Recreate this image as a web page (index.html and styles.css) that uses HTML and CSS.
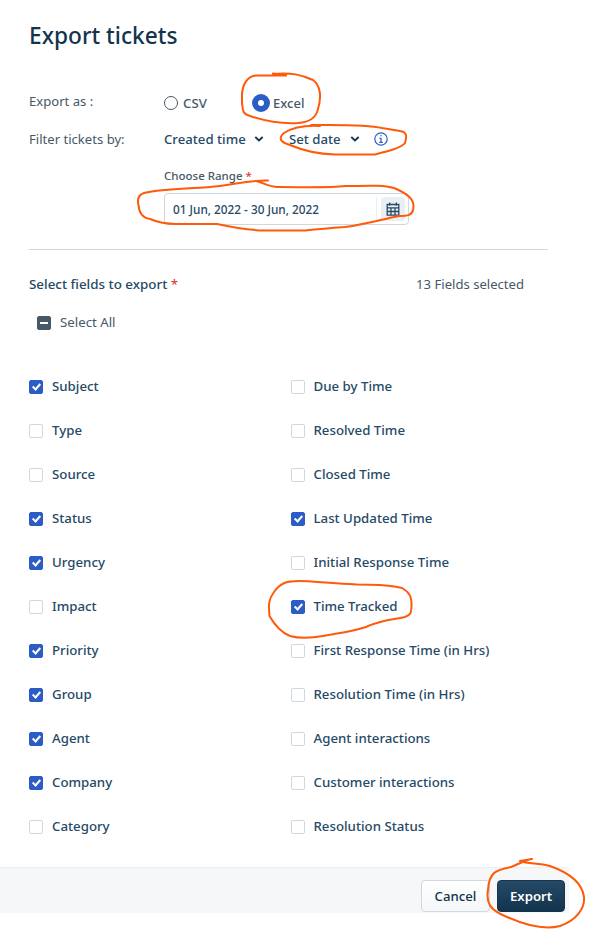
FILE: index.html
```html
<!DOCTYPE html>
<html lang="en">
<head>
<meta charset="utf-8">
<title>Export tickets</title>
<link rel="stylesheet" href="styles.css">
</head>
<body>
<main class="panel">
  <h1 class="title">Export tickets</h1>
  <div class="row row-format">
    <span class="row-label">Export as :</span>
    <span class="radio radio-csv"><i class="dot"></i>CSV</span>
    <span class="radio"><i class="dot dot-on"></i><span class="excel">Excel</span></span>
  </div>
  <div class="row row-filter">
    <span class="row-label filter-label">Filter tickets by:</span>
    <span class="select created">Created time <svg width="10" height="6" viewBox="0 0 10 6"><path d="M1.3 1 5 4.5 8.7 1"/></svg></span>
    <span class="select setdate">Set date <svg width="10" height="6" viewBox="0 0 10 6"><path d="M1.3 1 5 4.5 8.7 1"/></svg></span>
    <svg class="info" width="14" height="14" viewBox="0 0 14 14"><circle cx="7" cy="7" r="6.2"/><path d="M5.5 6.3H7v4M5.2 10.3h3.6M6.4 3.7h1.2"/></svg>
  </div>
  <div class="range">
    <div class="range-label">Choose Range <b class="req">*</b></div>
    <div class="range-input"><span class="range-value">01 Jun, 2022 - 30 Jun, 2022</span>
      <span class="cal-wrap"><span class="cal"><svg width="14" height="14" viewBox="0 0 14 14"><path d="M1.2 2.5h11.6v10.7H1.2zM1.2 5.8h11.6M1.2 9.5h11.6M5 5.8v7.4M9 5.8v7.4M3.7 .5v3.2M10.3 .5v3.2"/></svg></span></span>
    </div>
  </div>
  <div class="fields-head"><span class="fields-title">Select fields to export <b class="req">*</b></span><span class="count">13 Fields selected</span></div>
  <div class="all"><i class="box box-mixed"></i>Select All</div>
  <div class="fields">
    <div class="col">
      <label class="field"><i class="box on"></i>Subject</label>
      <label class="field"><i class="box"></i>Type</label>
      <label class="field"><i class="box"></i>Source</label>
      <label class="field"><i class="box on"></i>Status</label>
      <label class="field"><i class="box on"></i>Urgency</label>
      <label class="field"><i class="box"></i>Impact</label>
      <label class="field"><i class="box on"></i>Priority</label>
      <label class="field"><i class="box on"></i>Group</label>
      <label class="field"><i class="box on"></i>Agent</label>
      <label class="field"><i class="box on"></i>Company</label>
      <label class="field"><i class="box"></i>Category</label>
    </div>
    <div class="col">
      <label class="field"><i class="box"></i>Due by Time</label>
      <label class="field"><i class="box"></i>Resolved Time</label>
      <label class="field"><i class="box"></i>Closed Time</label>
      <label class="field"><i class="box on"></i>Last Updated Time</label>
      <label class="field"><i class="box"></i>Initial Response Time</label>
      <label class="field"><i class="box on"></i>Time Tracked</label>
      <label class="field"><i class="box"></i>First Response Time (in Hrs)</label>
      <label class="field"><i class="box"></i>Resolution Time (in Hrs)</label>
      <label class="field"><i class="box"></i>Agent interactions</label>
      <label class="field"><i class="box"></i>Customer interactions</label>
      <label class="field"><i class="box"></i>Resolution Status</label>
    </div>
  </div>
</main>
<footer class="footer"><button class="btn">Cancel</button><button class="btn btn-primary">Export</button></footer>
<svg class="marks" width="589" height="929" viewBox="0 0 589 929">
  <path d="M273 73.500L286 75.500M286 75.500H256C248 76 242 84 242 96V103C243 112 243 114 250 116C265 121 281 124 298 123C310 122 316 118 318 109C322 96 320 85 313 80C302 75 291 72 273 74"/>
  <path d="M311 125L320 126M320 126C303 125 292 128 284 133C278 138 280 142 290 145C304 151 319 154 335 154.500H375C389 151 401 148 405 143C407 136 407 132 400 131L382 128C370 125 350 124.500 311 125"/>
  <path d="M268 180.500C250 180 237 184 220 186C197 189 167 188 144 193C138 195 137 199 138.500 205C139 213 143 218 150 219C157 222 164 224 176 224H217C231 227 246 230 264 230.500H305C319 229 331 228 345 227C367 224 383 219 399 216C408 216 412 215 413 210C416 199 406 193 394 188C384 185 372 185.500 346 186C327 188 305 187 278 187C269 187 264 183 256 181"/>
  <path d="M349 584L357 584.500M349 584C325 583 313 581 299 581C288 581 281 582 274 592C267 601 269 609 269.500 616C274 624 280 632 290 636C301 639 312 638 323 636C339 633 351 632 366 627C381 620 391 620 405 617C411 615 411 613 411.500 607C412 596 409 592 402 588C388 584 378 585 357 584.500"/>
  <path d="M520 861L532 859M520 861C528 864 537 863 550 866C567 872 582 882 584 897C585 908 577 920 560 926C545 930 525 925 507 917C489 910 486 902 488 890C489 872 496 870 511 867C519 864 523 861 531 859"/>
</svg>
</body>
</html>
```

FILE: styles.css
```css
*, *::after { box-sizing: border-box; }
body { margin: 0; width: 589px; height: 929px; overflow: hidden; background: #fff; color: #264966; font: 500 13.25px/20px "Noto Sans", "Open Sans", sans-serif; }
.panel { padding: 21px 41px 0 29px; height: 867px; }
.title { margin: 0; height: 29px; font-size: 22.7px; line-height: 30px; font-weight: 500; color: #12344d; }
.row { display: flex; align-items: center; height: 38px; }
.row-format { margin-top: 33px; }
.row-filter { height: 36px; margin-bottom: 2px; }
.row-label { width: 135px; color: #475867; font-weight: 400; margin-top: -3px; font-size: 13.1px; }
.filter-label { margin-top: 0; }
.radio { display: flex; align-items: center; gap: 5px; padding-top: 2px; color: #475867; }
.radio-csv { width: 88px; }
.dot { width: 14px; height: 14px; border: 1px solid #475867; border-radius: 50%; }
.dot-on { width: 18px; height: 18px; border: 6px solid #2c5cc5; margin-right: -2px; }
.excel { font-size: 13px; }
.select { display: flex; align-items: center; justify-content: space-between; font-size: 13.2px; }
.select svg { fill: none; stroke: #12344d; stroke-width: 1.8; }
.created { width: 100px; }
.setdate { width: 71px; margin-left: 25px; }
.info { margin-left: 14px; fill: none; stroke: #2c5cc5; stroke-width: 1.2; }
.range { margin-left: 135px; width: 245px; font-size: 12px; }
.range-label { height: 34px; padding-top: 7px; color: #475867; font-size: 11.5px; }
.req { color: #d72d30; font-weight: 400; }
.range-input { display: flex; align-items: center; height: 32px; padding: 0 3px 0 8px; border: 1px solid #cfd7df; border-radius: 4px; font-size: 11.8px; }
.range-value { flex: 1; }
.cal-wrap { border-left: 1px solid #ebeff3; padding-left: 4px; }
.cal { display: grid; place-items: center; width: 24px; height: 24px; background: #ebeff3; border-radius: 4px; }
.cal svg { fill: none; stroke: #264966; stroke-width: 1.3; }
.fields-head { display: flex; justify-content: space-between; margin-top: 24px; padding: 24px 24px 0 0; border-top: 1px solid #cfd7df; height: 60px; }
.fields-title { font-size: 13.4px; }
.count { font-size: 13.1px; font-weight: 400; color: #475867; }
.all { display: flex; align-items: center; gap: 9px; padding-left: 8px; height: 26px; font-weight: 400; color: #475867; }
.fields { display: flex; margin-top: 29px; }
.col { flex: none; width: 262px; }
.col + .col { width: 257px; }
.col + .col .field { gap: 8.5px; }
.field { display: flex; align-items: center; gap: 9px; height: 44px; white-space: nowrap; }
.box { position: relative; top: .5px; flex: none; display: block; width: 14px; height: 14px; border: 1px solid #cfd7df; border-radius: 2px; background: #fff; }
.on { background: #2c5cc5; border-color: #2c5cc5; }
.on::after { content: ""; position: absolute; left: 4px; top: 1px; width: 5px; height: 8px; border: solid #fff; border-width: 0 2px 2px 0; transform: rotate(42deg); }
.box-mixed { top: 1px; background: #475867; border-color: #475867; }
.box-mixed::after { content: ""; position: absolute; left: 2px; top: 5px; width: 8px; height: 2px; background: #fff; }
.footer { display: flex; justify-content: flex-end; gap: 7px; width: 569px; height: 46px; padding: 12px 4px 0 0; background: #f5f7f9; border-top: 1px solid #ebeff3; }
.btn { width: 69px; height: 32px; padding: 0; border: 1px solid #cfd7df; border-radius: 4px; background: linear-gradient(#fff, #f5f7f9); color: #12344d; font: 500 13.2px/20px "Noto Sans", sans-serif; }
.btn-primary { width: 68px; border-color: #12344d; background: linear-gradient(#264966, #12344d); color: #fff; font-weight: 600; }
.marks { position: absolute; left: 0; top: 0; fill: none; stroke: #ff5a0a; stroke-width: 2; stroke-linecap: round; stroke-linejoin: round; pointer-events: none; }
```
